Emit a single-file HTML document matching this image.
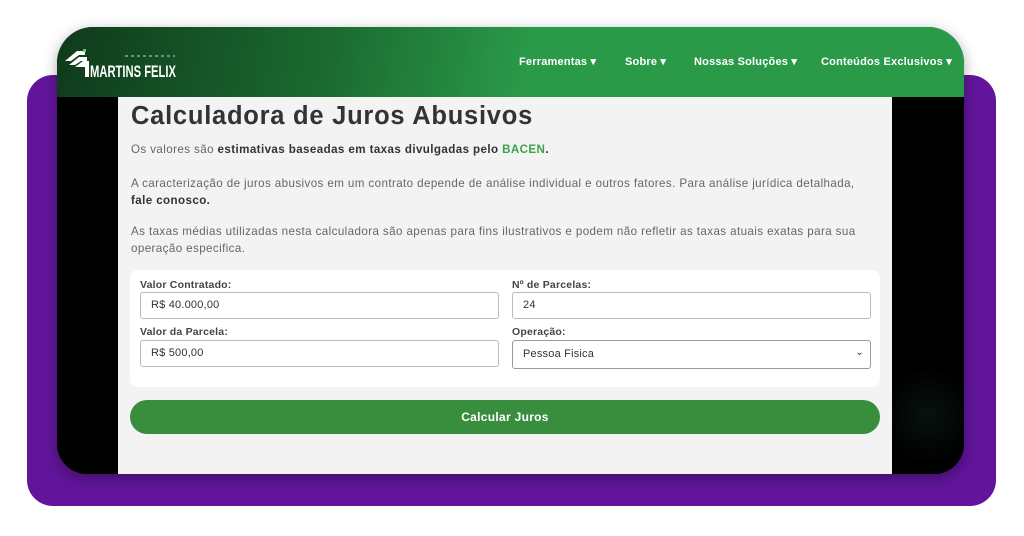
<!DOCTYPE html>
<html><head><meta charset="utf-8"><style>
*{margin:0;padding:0;box-sizing:border-box}
body{width:1024px;height:536px;background:#fff;position:relative;overflow:hidden;font-family:"Liberation Sans",Arial,sans-serif}
.purple{position:absolute;left:27px;top:75px;width:969px;height:431px;background:#62159b;border-radius:26px}
.dev{position:absolute;left:57px;top:27px;width:907px;height:447px;background:#000;border-radius:36px 36px 30px 30px;overflow:hidden;box-shadow:0 4px 14px rgba(0,0,0,.35)}
.hdr{position:absolute;left:0;top:0;width:907px;height:70px;background:linear-gradient(100deg,#0f3a1c 0%,#1b6a30 30%,#2a9a49 52%,#2a9a49 100%)}
.nav{position:absolute;top:28px;font-size:11px;font-weight:bold;color:#fff;letter-spacing:.2px;white-space:nowrap}
.nav span{position:absolute}
.panel{position:absolute;left:61px;top:70px;width:774px;height:377px;background:#f3f3f3}
.glow{position:absolute;left:835px;top:330px;width:72px;height:117px;background:radial-gradient(circle at 50% 50%,#08120c 0%,#000 70%)}
h1{position:absolute;left:13px;top:5px;font-size:25.5px;color:#333;font-weight:bold;letter-spacing:.75px}
p{position:absolute;left:13px;font-size:11.6px;color:#666;letter-spacing:.4px;line-height:17px;width:742px}
p b{color:#333}
.card{position:absolute;left:12px;top:173px;width:750px;height:117px;background:#fff;border-radius:8px}
.lbl{position:absolute;font-size:10.5px;font-weight:bold;color:#444;letter-spacing:.2px}
.in{position:absolute;height:27px;border:1px solid #bbb;border-radius:3px;background:#fff;font-size:11px;color:#333;padding:6px 10px;letter-spacing:.2px}
.btn{position:absolute;left:12px;top:303px;width:750px;height:34px;background:#388e3c;border-radius:17px;color:#fff;font-weight:bold;font-size:12px;text-align:center;line-height:34px;letter-spacing:.3px}
</style></head><body>
<div class="purple"></div>
<div class="dev">
<div class="hdr">
<svg style="position:absolute;left:6px;top:20px" width="120" height="32" viewBox="0 0 120 32">
<path d="M2 14 L14 4 L22 4 L22 8 L16 8 L8 14 Z" fill="#fff"/>
<path d="M6 18 L16 10 L24 10 L24 14 L18 14 L12 18 Z" fill="#fff"/>
<path d="M12 20 L20 14 L26 14 L26 30 L22 30 L22 20 Z" fill="#fff"/>
<rect x="20" y="2" width="3" height="3" fill="#5bd36a"/>
<text x="27" y="30" font-family="Liberation Sans" font-weight="bold" font-size="17" fill="#fff" textLength="86" lengthAdjust="spacingAndGlyphs">MARTINS FELIX</text>
<path d="M62 9 H112" stroke="#9bb" stroke-width="1.2" stroke-dasharray="3 3"/>
</svg>
<div class="nav">
<span style="left:462px">Ferramentas ▾</span>
<span style="left:568px">Sobre ▾</span>
<span style="left:637px">Nossas Soluções ▾</span>
<span style="left:764px">Conteúdos Exclusivos ▾</span>
</div>
</div>
<div class="glow"></div>
<div class="panel">
<h1>Calculadora de Juros Abusivos</h1>
<p style="top:44px">Os valores são <b>estimativas baseadas em taxas divulgadas pelo <span style="color:#3aa44a">BACEN</span>.</b></p>
<p style="top:78px">A caracterização de juros abusivos em um contrato depende de análise individual e outros fatores. Para análise jurídica detalhada,<br><b>fale conosco.</b></p>
<p style="top:126px">As taxas médias utilizadas nesta calculadora são apenas para fins ilustrativos e podem não refletir as taxas atuais exatas para sua operação especifica.</p>
<div class="card">
<div class="lbl" style="left:10px;top:9px">Valor Contratado:</div>
<div class="in" style="left:10px;top:22px;width:359px">R$ 40.000,00</div>
<div class="lbl" style="left:382px;top:9px">Nº de Parcelas:</div>
<div class="in" style="left:382px;top:22px;width:359px">24</div>
<div class="lbl" style="left:10px;top:56px">Valor da Parcela:</div>
<div class="in" style="left:10px;top:70px;width:359px">R$ 500,00</div>
<div class="lbl" style="left:382px;top:56px">Operação:</div>
<div class="in" style="left:382px;top:70px;width:359px;height:29px;border-color:#999;padding-top:7px">Pessoa Fisica<span style="position:absolute;right:6px;top:6px;font-size:10px">⌄</span></div>
</div>
<div class="btn">Calcular Juros</div>
</div>
</div>
</body></html>
